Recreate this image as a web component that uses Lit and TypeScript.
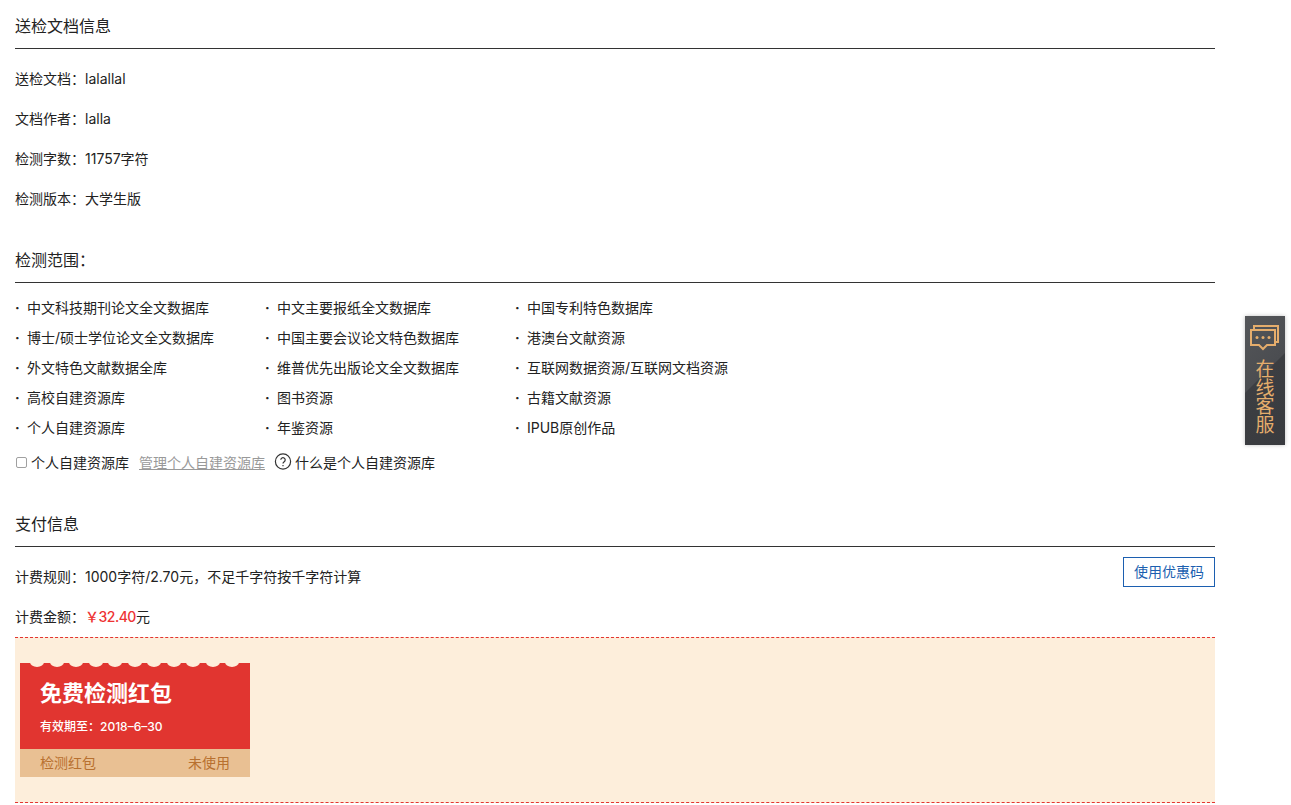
import { LitElement, html, css } from "lit";
import { customElement } from "lit/decorators.js";

const SCOPE = [
  ["中文科技期刊论文全文数据库", "中文主要报纸全文数据库", "中国专利特色数据库"],
  ["博士/硕士学位论文全文数据库", "中国主要会议论文特色数据库", "港澳台文献资源"],
  ["外文特色文献数据全库", "维普优先出版论文全文数据库", "互联网数据资源/互联网文档资源"],
  ["高校自建资源库", "图书资源", "古籍文献资源"],
  ["个人自建资源库", "年鉴资源", "IPUB原创作品"],
];

@customElement("app-root")
export class AppRoot extends LitElement {
  static styles = css`
    :host {
      display: block;
      position: relative;
      width: 1291px;
      height: 805px;
      overflow: hidden;
      background: #fff;
      color: #222;
      font-family: Inter, "Noto Sans CJK SC", sans-serif;
      font-size: 14px;
    }
    .page { width: 1200px; margin-left: 15px; }
    .head {
      height: 48px;
      line-height: 53px;
      font-size: 16px;
      border-bottom: 1px solid #333;
    }
    .head.scope { height: 33px; line-height: 22px; margin-top: 20px; }
    .head.pay { height: 32px; line-height: 20px; margin-top: 42px; }
    .info { height: 40px; line-height: 20px; }
    .info.last { height: 30px; }
    .infos { padding-top: 20px; }
    .grid {
      display: grid;
      grid-template-columns: repeat(3, 250px);
      grid-auto-rows: 30px;
      line-height: 20px;
      padding-top: 15px;
    }
    .cell { display: flex; }
    .cell::before { content: "·"; width: 12px; flex: none; font-weight: 700; }
    .custom {
      display: flex;
      align-items: center;
      height: 20px;
      margin-top: 4px;
    }
    .box {
      width: 11px;
      height: 11px;
      box-sizing: border-box;
      border: 1px solid #a0a0a0;
      border-radius: 2px;
      background: #fff;
      margin: 1px 4px 0 1px;
      flex: none;
    }
    .manage { color: #999; text-decoration: underline; margin: 0 9px 0 10px; }
    .q { width: 18px; height: 18px; margin-right: 3px; flex: none; }
    .pay-rows { position: relative; padding-top: 20px; }
    .coupon-btn {
      position: absolute;
      right: 0;
      top: 10px;
      width: 92px;
      height: 30px;
      box-sizing: border-box;
      border: 1px solid #1c5fb0;
      color: #1c5fb0;
      background: #fff;
      font: inherit;
      line-height: 28px;
      padding: 0;
      text-align: center;
    }
    .price { color: #ee3333; font-weight: 500; letter-spacing: -0.5px; }
    .zone {
      height: 139px;
      background: #fdeedb;
      border-top: 1px dashed #e33530;
      border-bottom: 1px dashed #e33530;
      padding: 25px 0 0 5px;
    }
    .card { width: 230px; height: 114px; display: flex; flex-direction: column; position: relative; }
    .card-top {
      height: 86px;
      background: #e13530;
      color: #fff;
      padding: 17px 0 0 20px;
      box-sizing: border-box;
    }
    .card-title { font-size: 22px; font-weight: 700; line-height: 28px; margin-top: -1px; }
    .card-date { font-size: 12px; font-weight: 500; line-height: 16px; margin-top: 12px; }
    .scallops {
      position: absolute;
      left: 10px;
      top: -6px;
      display: flex;
      gap: 5.5px;
    }
    .scallops span { width: 14px; height: 10px; border-radius: 50%; background: #fdeedb; }
    .card-bottom {
      height: 28px;
      box-sizing: border-box;
      background: #e9c093;
      color: #b8702f;
      display: flex;
      justify-content: space-between;
      align-items: center;
      padding: 0 20px 2px;
    }
    .side {
      position: absolute;
      left: 1245px;
      top: 316px;
      width: 40px;
      height: 129px;
      background: linear-gradient(135deg, #545659 0%, #4b4d51 45%, #3c3e42 46%, #393b3f 100%);
      box-shadow: 0 0 4px rgba(0, 0, 0, 0.25);
      color: #e5ad6c;
      display: flex;
      flex-direction: column;
      align-items: center;
    }
    .side svg { margin-top: 9px; width: 30px; height: 26px; }
    .side-text {
      font-size: 19px;
      line-height: 18.5px;
      width: 19px;
      text-align: center;
      margin-top: 10px;
    }
  `;

  render() {
    return html`
      <div class="page">
        <div class="head">送检文档信息</div>
        <div class="infos">
          <div class="info">送检文档：lalallal</div>
          <div class="info">文档作者：lalla</div>
          <div class="info">检测字数：11757字符</div>
          <div class="info">检测版本：大学生版</div>
        </div>
        <div class="head scope">检测范围：</div>
        <div class="grid">
          ${SCOPE.flat().map((t) => html`<div class="cell">${t}</div>`)}
        </div>
        <div class="custom">
          <span class="box"></span>
          <span>个人自建资源库</span>
          <span class="manage">管理个人自建资源库</span>
          <svg class="q" viewBox="0 0 18 18" fill="none" stroke="#333" stroke-width="1.2">
            <circle cx="9" cy="8.5" r="7.6"></circle>
            <path d="M6.8 6.8a2.2 2.2 0 1 1 3.4 1.9c-.8.5-1.2 1-1.2 1.9"></path>
            <path d="M9 12v1.2"></path>
          </svg>
          <span>什么是个人自建资源库</span>
        </div>
        <div class="head pay">支付信息</div>
        <div class="pay-rows">
          <div class="info">计费规则：1000字符/2.70元，不足千字符按千字符计算</div>
          <div class="info last">计费金额：<span class="price">￥32.40</span>元</div>
          <button class="coupon-btn">使用优惠码</button>
        </div>
        <div class="zone">
          <div class="card">
            <div class="card-top">
              <div class="card-title">免费检测红包</div>
              <div class="card-date">有效期至：2018–6–30</div>
            </div>
            <div class="scallops">
              ${Array.from({ length: 11 }).map(() => html`<span></span>`)}
            </div>
            <div class="card-bottom"><span>检测红包</span><span>未使用</span></div>
          </div>
        </div>
      </div>
      <div class="side">
        <svg viewBox="0 0 30 26" fill="none" stroke="#e5ad6c" stroke-width="2">
          <path d="M4 5V1h24v16h-3"></path>
          <path d="M1 5h24v15h-8l-4 4-4-4H1z"></path>
          <circle cx="7" cy="12.5" r="1.5" fill="#e5ad6c" stroke="none"></circle>
          <circle cx="13" cy="12.5" r="1.5" fill="#e5ad6c" stroke="none"></circle>
          <circle cx="19" cy="12.5" r="1.5" fill="#e5ad6c" stroke="none"></circle>
        </svg>
        <div class="side-text">在线客服</div>
      </div>
    `;
  }
}
